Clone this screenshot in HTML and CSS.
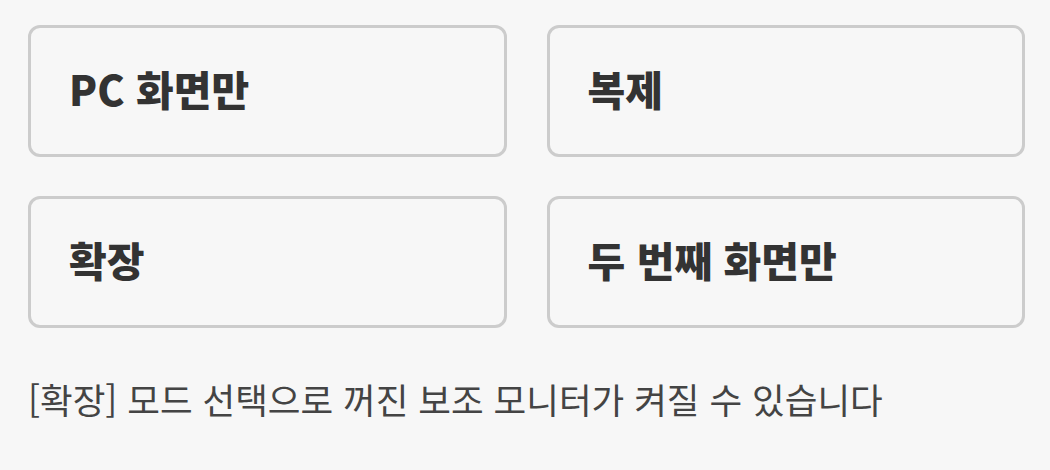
FILE: index.html
```html
<!DOCTYPE html>
<html lang="ko">

<head>
    <meta charset="UTF-8">
    <meta name="viewport" content="width=device-width, initial-scale=1.0">
    <title>디스플레이 모드</title>
    <link rel="stylesheet" href="styles.css">
</head>

<body>
    <div class="modes">
        <button class="mode">PC 화면만</button>
        <button class="mode">복제</button>
        <button class="mode">확장</button>
        <button class="mode">두 번째 화면만</button>
    </div>

    <p class="hint">[확장] 모드 선택으로 꺼진 보조 모니터가 켜질 수 있습니다</p>
</body>

</html>
```

FILE: styles.css
```css
*,
html {
    padding: 0;
    margin: 0;
    box-sizing: border-box;
}

body {
    background: #f7f7f7;
    padding: 25px 25px 0 28px;
    font-family: "Noto Sans CJK KR", "Noto Sans", sans-serif;
    color: #333;
}

.modes {
    display: grid;
    grid-template-columns: 1fr 1fr;
    grid-auto-rows: 132px;
    column-gap: 40px;
    row-gap: 39px;
}

.mode {
    border: solid 3px #cccccc;
    border-radius: 12px;
    background: #f7f7f7;
    font-family: inherit;
    font-size: 41px;
    font-weight: 900;
    color: #333;
    text-align: left;
    padding: 0 0 6px 38px;
    letter-spacing: 0;
}

.hint {
    margin-top: 46px;
    font-size: 35.5px;
    line-height: 50px;
    color: #444;
}
```
